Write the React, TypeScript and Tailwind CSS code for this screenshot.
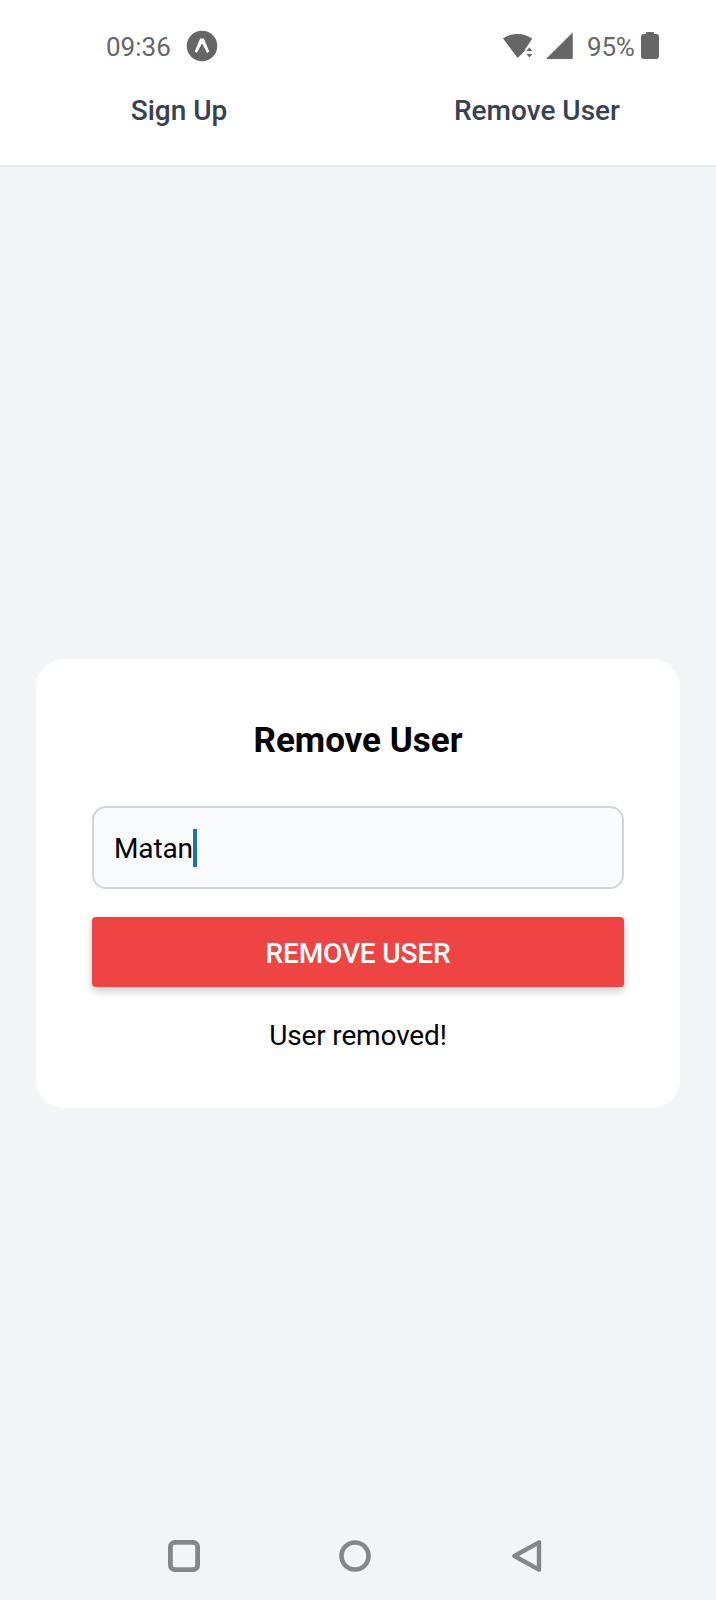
import { useState } from "react";

function ExpoIcon() {
  return (
    <svg width="32" height="32" viewBox="0 0 32 32" aria-hidden="true">
      <circle cx="16" cy="16" r="15.3" fill="#666666" />
      <path d="M14.4 9.1H17.6L22.6 21.4 21.4 22.2 16 12.2 10.6 22.2 9.4 21.4Z" fill="#fff" stroke="#fff" strokeWidth="1.1" strokeLinejoin="round" />
    </svg>
  );
}

function WifiIcon() {
  return (
    <svg width="30" height="28" viewBox="0 0 30 28" fill="#666666" aria-hidden="true">
      <path d="M0 6.6C8.2 .3 21 .3 29.3 6.6L24.2 14.3 22.3 17V18.2L14.7 26Z" />
      <path d="M22.3 17.2L25.4 14H30V26h-7.7z" fill="#fff" />
      <path d="M23.4 18.9 26.4 15.4 29.4 18.9ZM23.4 22.1 26.4 25.6 29.4 22.1Z" />
    </svg>
  );
}

function SignalIcon() {
  return (
    <svg width="28" height="28" viewBox="0 0 28 28" aria-hidden="true">
      <path d="M.9 26.6 26.2 1.4V26.6Z" fill="#666666" stroke="#666666" strokeWidth="1" strokeLinejoin="round" />
    </svg>
  );
}

function BatteryIcon() {
  return (
    <svg width="18" height="27" viewBox="0 0 18 27" fill="#666666" aria-hidden="true">
      <rect x="5" y="0" width="8" height="5" rx="1" />
      <rect x="0" y="2" width="18" height="25" rx="3" />
    </svg>
  );
}

function StatusBar() {
  return (
    <div className="flex h-[91px] items-center justify-between pr-[57px] pl-[106px] text-[26px] text-[#666666]">
      <div className="flex items-center gap-[15px]">
        <span className="w-[65px] pt-1">09:36</span>
        <ExpoIcon />
      </div>
      <div className="flex items-center">
        <WifiIcon />
        <span className="ml-[13px] flex pt-[1px]">
          <SignalIcon />
        </span>
        <span className="ml-[13px] w-[54px] pt-1 tracking-[-0.2px]">95%</span>
        <BatteryIcon />
      </div>
    </div>
  );
}

function NavigationBar() {
  return (
    <div className="flex h-[88px] items-center justify-between px-[168px] text-[#868686]">
      <svg width="32" height="32" viewBox="0 0 32 32" fill="none" stroke="currentColor" strokeWidth="4.8">
        <rect x="2.4" y="2.4" width="27.2" height="27.2" rx="4.4" />
      </svg>
      <svg width="34" height="32" viewBox="0 0 34 32" fill="none" stroke="currentColor" strokeWidth="4.6">
        <circle cx="16" cy="16" r="13.5" />
      </svg>
      <svg width="36" height="32" viewBox="0 0 36 32" fill="none" stroke="currentColor" strokeWidth="4.4" strokeLinejoin="round">
        <path d="M2.4 16 27 2.3V29.7Z" />
      </svg>
    </div>
  );
}

export default function App() {
  const [name] = useState("Matan");

  return (
    <div className="flex h-[1600px] w-[716px] flex-col bg-[#f2f4f6] font-['Roboto',sans-serif]">
      <header className="h-[167px] shrink-0 border-b-2 border-[#e5e7eb] bg-white">
        <StatusBar />
        <nav className="grid grid-cols-2 text-center text-[28px] leading-10 font-medium text-[#374151]">
          <a>Sign Up</a>
          <a>Remove User</a>
        </nav>
      </header>

      <main className="flex-1 px-9 pt-[492px]">
        <section className="h-[449px] rounded-[28px] bg-white px-14 pt-[61px] text-black">
          <h1 className="text-center text-[35px] leading-[42px] font-bold">Remove User</h1>
          <div className="mt-[44px] flex h-[83px] items-center rounded-[14px] border-2 border-[#d1d5db] bg-[#f9fafb] px-5 text-[28px]">
            <span className="pt-[2px] tracking-[-0.15px]">{name}</span>
            <span className="h-[38px] w-1 bg-[#2372a3]" />
          </div>
          <button className="mt-7 flex h-[70px] w-full items-center justify-center rounded-[4px] bg-[#ef4444] pt-[3px] text-[28px] font-medium tracking-[-0.15px] text-white shadow-[0_4px_8px_rgba(0,0,0,0.22)]">
            REMOVE USER
          </button>
          <p className="mt-[29px] text-center text-[28px] leading-10 tracking-[-0.15px]">User removed!</p>
        </section>
      </main>

      <NavigationBar />
    </div>
  );
}
